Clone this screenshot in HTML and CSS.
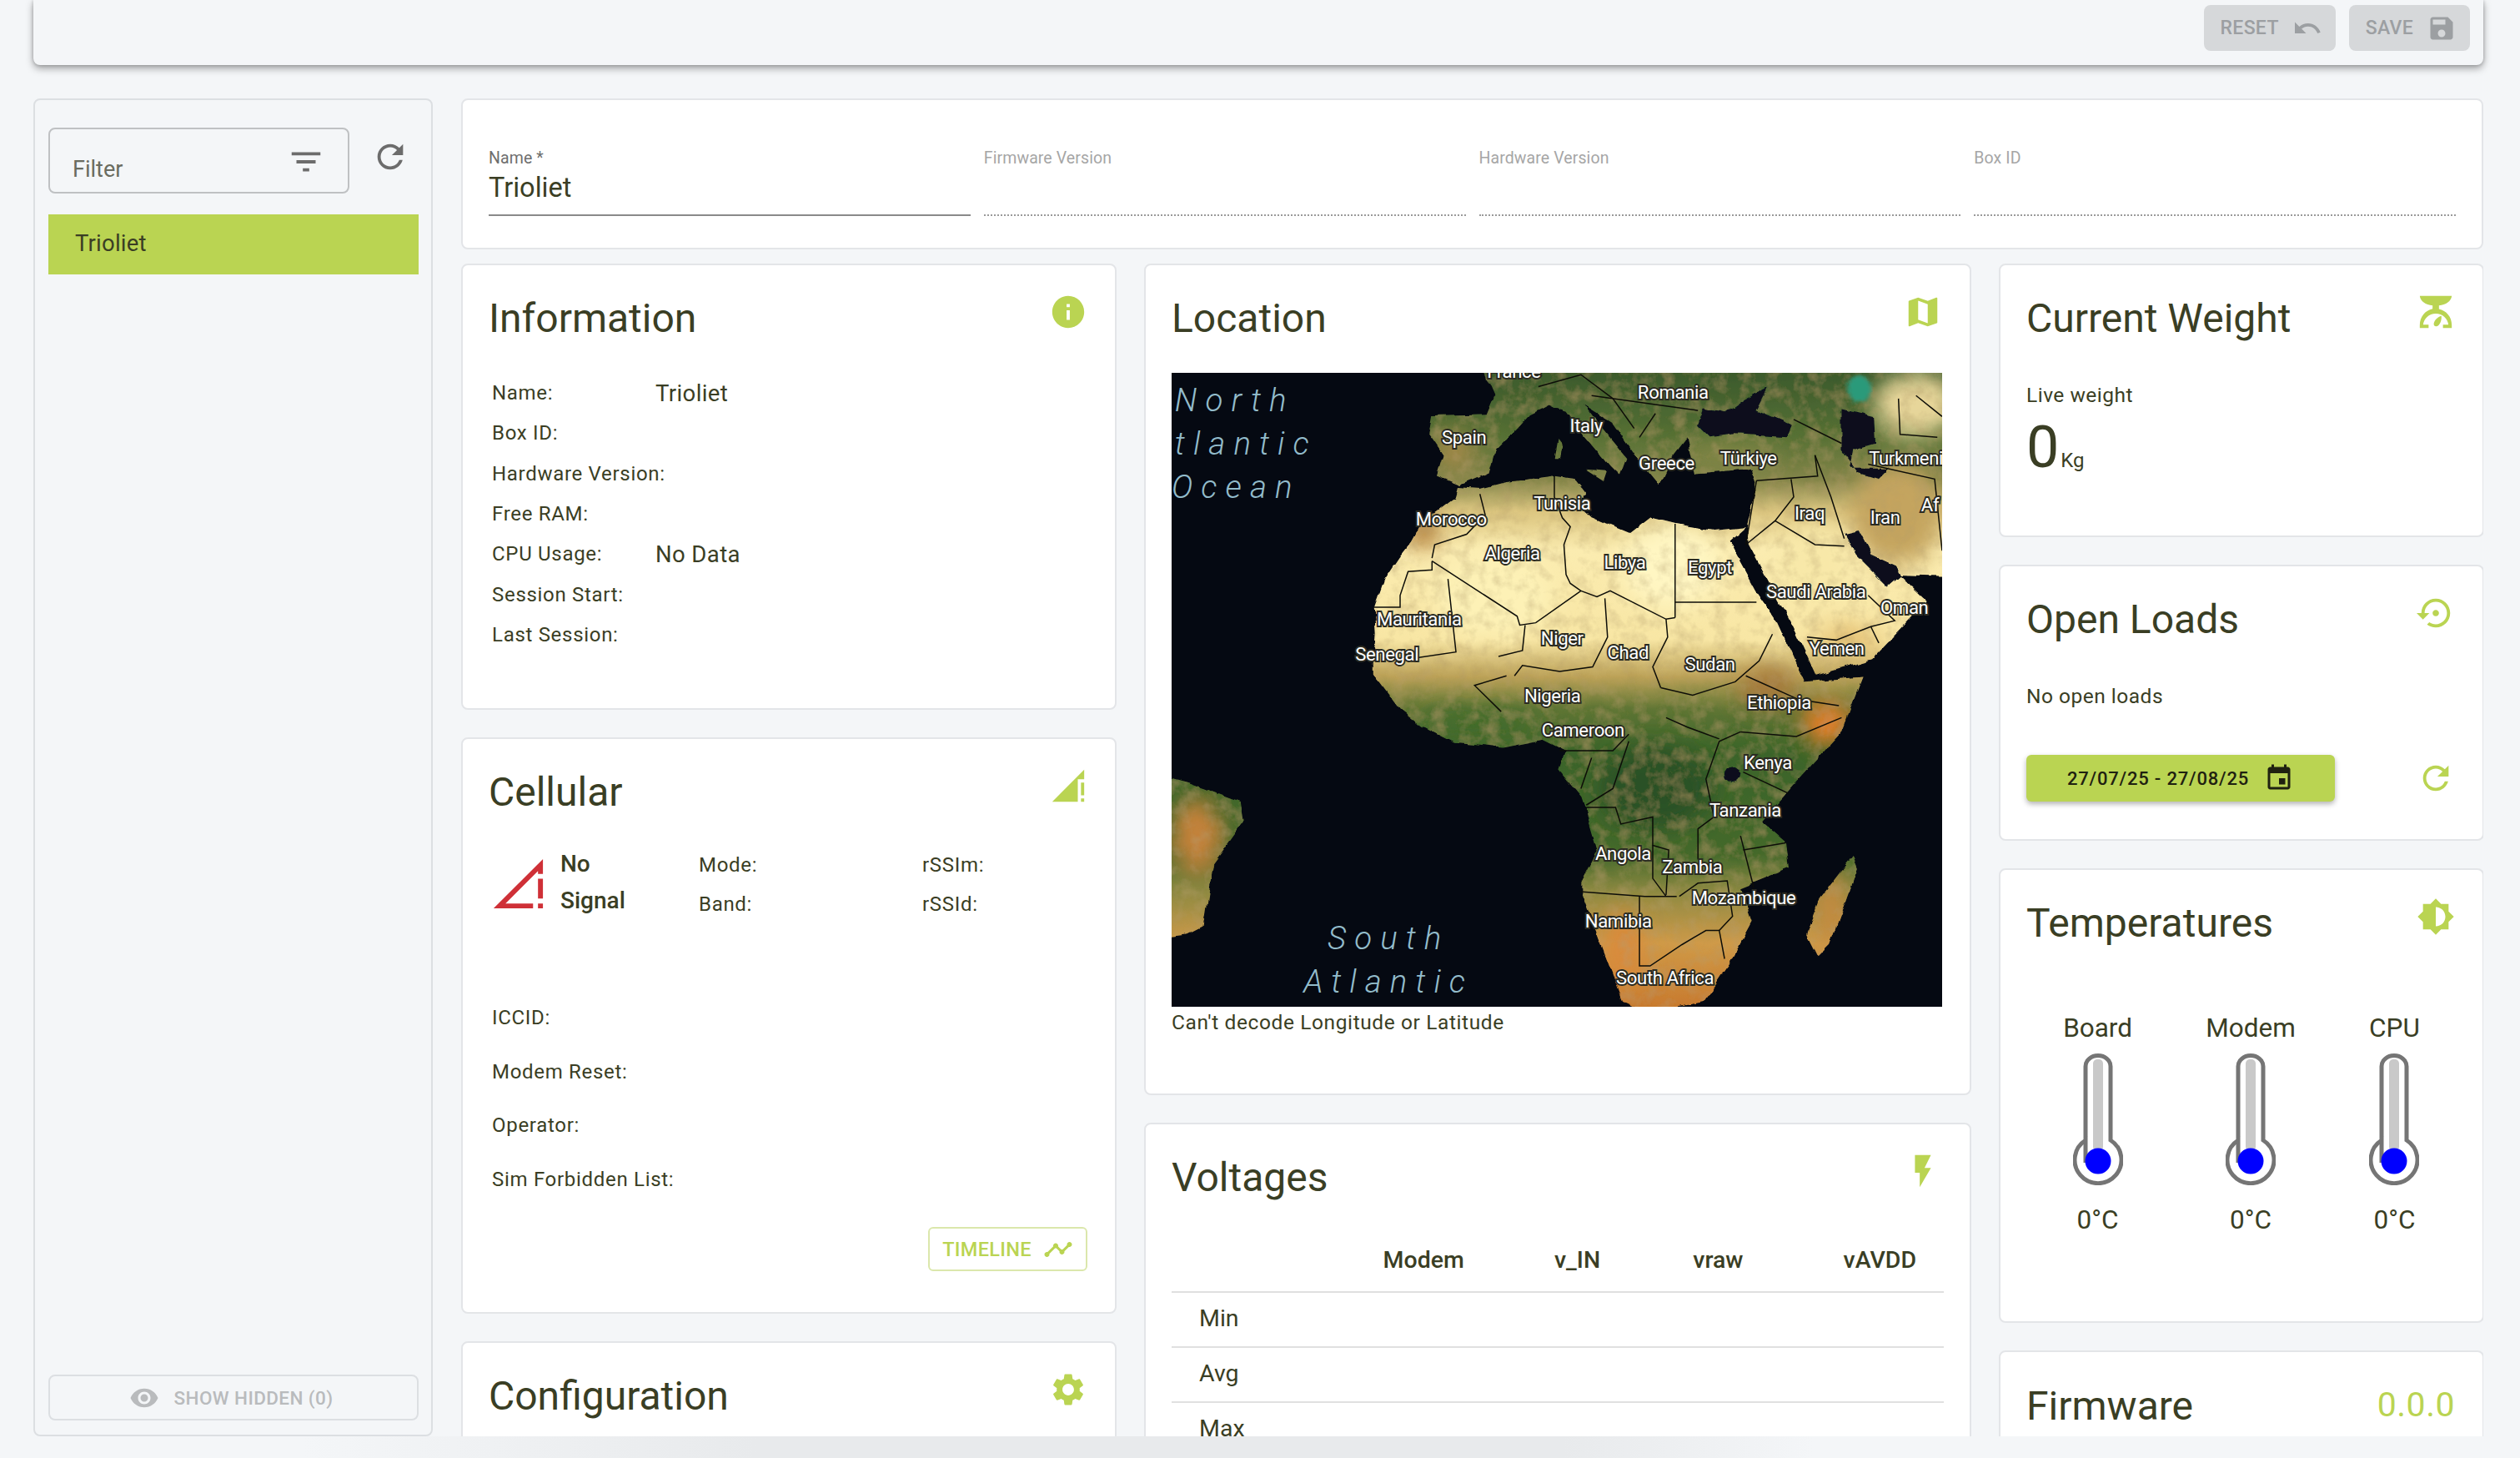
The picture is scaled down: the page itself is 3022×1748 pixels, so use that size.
FILE: index.html
```html
<!DOCTYPE html>
<html lang="en">
<head>
    <meta charset="UTF-8">
    <meta name="viewport" content="width=device-width, initial-scale=1.0">
    <title>Device Details</title>
    <link rel="stylesheet" href="styles.css">
</head>
<body>
    <svg class="defs" aria-hidden="true">
        <symbol id="thermometer" viewBox="0 0 60 160">
            <path d="M15 133 V17.500 a15 13 0 0 1 30 0 V106 a28 28 0 1 1 -30 0 Z" fill="#fff" stroke="#757575" stroke-width="5"/>
            <rect x="24" y="9" width="12" height="110" rx="5" fill="#c9c9c9"/>
            <circle cx="30" cy="131" r="15.5" fill="#0000ff"/>
        </symbol>
    </svg>

    <header class="toolbar">
        <button class="toolbar-btn">RESET
            <svg class="btn-icon" viewBox="0 0 24 24"><path d="M12.5 8c-2.65 0-5.05.99-6.9 2.6L2 7v9h9l-3.62-3.62c1.39-1.16 3.16-1.88 5.12-1.88 3.54 0 6.55 2.31 7.6 5.5l2.37-.78C21.08 11.03 17.15 8 12.5 8z"/></svg>
        </button>
        <button class="toolbar-btn">SAVE
            <svg class="btn-icon" viewBox="0 0 24 24"><path d="M17 3H5c-1.11 0-2 .9-2 2v14c0 1.1.89 2 2 2h14c1.1 0 2-.9 2-2V7l-4-4zm-5 16c-1.66 0-3-1.34-3-3s1.34-3 3-3 3 1.34 3 3-1.34 3-3 3zm3-10H5V5h10v4z"/></svg>
        </button>
    </header>

    <div class="content">
        <aside class="sidebar">
            <div class="filter-row">
                <div class="filter-box">
                    <span class="filter-text">Filter</span>
                    <svg class="icon filter-icon" viewBox="0 0 24 24"><path d="M10 18h4v-2h-4v2zM3 6v2h18V6H3zm3 7h12v-2H6v2z"/></svg>
                </div>
                <svg class="icon refresh-grey" viewBox="0 0 24 24"><path d="M17.65 6.35C16.2 4.9 14.21 4 12 4c-4.42 0-7.99 3.58-7.99 8s3.57 8 7.99 8c3.73 0 6.84-2.55 7.73-6h-2.08c-.82 2.33-3.04 4-5.65 4-3.31 0-6-2.69-6-6s2.69-6 6-6c1.66 0 3.14.69 4.22 1.78L13 11h7V4l-2.35 2.35z"/></svg>
            </div>
            <div class="device-item">Trioliet</div>
            <button class="show-hidden">
                <svg class="eye-icon" viewBox="0 0 24 24"><path d="M12 4.5C7 4.5 2.73 7.61 1 12c1.73 4.39 6 7.5 11 7.5s9.27-3.11 11-7.5c-1.73-4.39-6-7.5-11-7.5zM12 17c-2.76 0-5-2.24-5-5s2.24-5 5-5 5 2.24 5 5-2.24 5-5 5zm0-8c-1.66 0-3 1.34-3 3s1.34 3 3 3 3-1.34 3-3-1.34-3-3-3z"/></svg>
                SHOW HIDDEN (0)
            </button>
        </aside>

        <main class="main">
            <section class="card name-card">
                <div class="field field-active">
                    <label>Name *</label>
                    <div class="field-value">Trioliet</div>
                </div>
                <div class="field">
                    <label>Firmware Version</label>
                    <div class="field-value"></div>
                </div>
                <div class="field">
                    <label>Hardware Version</label>
                    <div class="field-value"></div>
                </div>
                <div class="field">
                    <label>Box ID</label>
                    <div class="field-value"></div>
                </div>
            </section>

            <div class="columns">
                <div class="column">
                    <section class="card info-card">
                        <div class="card-head">
                            <h2>Information</h2>
                            <svg class="icon" viewBox="0 0 24 24"><path d="M12 2C6.48 2 2 6.48 2 12s4.48 10 10 10 10-4.48 10-10S17.52 2 12 2zm1 15h-2v-6h2v6zm0-8h-2V7h2v2z"/></svg>
                        </div>
                        <div class="info-row"><span class="info-label">Name:</span><span class="info-value">Trioliet</span></div>
                        <div class="info-row"><span class="info-label">Box ID:</span></div>
                        <div class="info-row"><span class="info-label">Hardware Version:</span></div>
                        <div class="info-row"><span class="info-label">Free RAM:</span></div>
                        <div class="info-row"><span class="info-label">CPU Usage:</span><span class="info-value">No Data</span></div>
                        <div class="info-row"><span class="info-label">Session Start:</span></div>
                        <div class="info-row"><span class="info-label">Last Session:</span></div>
                    </section>

                    <section class="card cellular-card">
                        <div class="card-head">
                            <h2>Cellular</h2>
                            <svg class="icon" viewBox="0 0 24 24"><path d="M20 18h2v-8h-2v8zm0 4h2v-2h-2v2zM2 22h16V8h4V2L2 22z"/></svg>
                        </div>
                        <div class="signal-grid">
                            <div class="signal-status">
                                <svg class="signal-icon" viewBox="0 0 24 24"><path d="M2 22h16v-2H6.83L20 6.83V8h2V2L2 22zM20 18h2v-8h-2v8zM20 22h2v-2h-2v2z"/></svg>
                                <div class="signal-text">No<br>Signal</div>
                            </div>
                            <div class="signal-col">
                                <div class="signal-cell">Mode:</div>
                                <div class="signal-cell">Band:</div>
                            </div>
                            <div class="signal-col">
                                <div class="signal-cell">rSSIm:</div>
                                <div class="signal-cell">rSSId:</div>
                            </div>
                        </div>
                        <div class="cell-row">ICCID:</div>
                        <div class="cell-row">Modem Reset:</div>
                        <div class="cell-row">Operator:</div>
                        <div class="cell-row">Sim Forbidden List:</div>
                        <div class="card-actions">
                            <button class="timeline-btn">TIMELINE
                                <svg class="btn-icon" viewBox="0 0 24 24"><path d="M23 8c0 1.1-.9 2-2 2-.18 0-.35-.02-.51-.07l-3.56 3.55c.05.16.07.34.07.52 0 1.1-.9 2-2 2s-2-.9-2-2c0-.18.02-.36.07-.52l-2.55-2.55c-.16.05-.34.07-.52.07s-.36-.02-.52-.07l-4.55 4.56c.05.16.07.33.07.51 0 1.1-.9 2-2 2s-2-.9-2-2 .9-2 2-2c.18 0 .35.02.51.07l4.56-4.55C8.02 9.36 8 9.18 8 9c0-1.1.9-2 2-2s2 .9 2 2c0 .18-.02.36-.07.52l2.55 2.55c.16-.05.34-.07.52-.07s.36.02.52.07l3.55-3.56C19.02 8.35 19 8.18 19 8c0-1.1.9-2 2-2s2 .9 2 2z"/></svg>
                            </button>
                        </div>
                    </section>

                    <section class="card">
                        <div class="card-head">
                            <h2>Configuration</h2>
                            <svg class="icon" viewBox="0 0 24 24"><path d="M19.14 12.94c.04-.3.06-.61.06-.94 0-.32-.02-.64-.07-.94l2.03-1.58c.18-.14.23-.41.12-.61l-1.92-3.32c-.12-.22-.37-.29-.59-.22l-2.39.96c-.5-.38-1.03-.7-1.62-.94l-.36-2.54c-.04-.24-.24-.41-.48-.41h-3.84c-.24 0-.43.17-.47.41l-.36 2.54c-.59.24-1.13.57-1.62.94l-2.39-.96c-.22-.08-.47 0-.59.22L2.74 8.87c-.12.21-.08.47.12.61l2.03 1.58c-.05.3-.09.63-.09.94s.02.64.07.94l-2.03 1.58c-.18.14-.23.41-.12.61l1.92 3.32c.12.22.37.29.59.22l2.39-.96c.5.38 1.03.7 1.62.94l.36 2.54c.05.24.24.41.48.41h3.84c.24 0 .44-.17.47-.41l.36-2.54c.59-.24 1.13-.56 1.62-.94l2.39.96c.22.08.47 0 .59-.22l1.92-3.32c.12-.22.07-.47-.12-.61l-2.01-1.58zM12 15.6c-1.98 0-3.6-1.62-3.6-3.6s1.62-3.6 3.6-3.6 3.6 1.62 3.6 3.6-1.62 3.6-3.6 3.6z"/></svg>
                        </div>
                        <div class="spacer"></div>
                    </section>
                </div>

                <div class="column">
                    <section class="card location-card">
                        <div class="card-head">
                            <h2>Location</h2>
                            <svg class="icon" viewBox="0 0 24 24"><path d="m20.5 3-.16.03L15 5.1 9 3 3.36 4.9c-.21.07-.36.25-.36.48V20.5c0 .28.22.5.5.5l.16-.03L9 18.9l6 2.1 5.64-1.9c.21-.07.36-.25.36-.48V3.5c0-.28-.22-.5-.5-.5zM15 19l-6-2.11V5l6 2.11V19z"/></svg>
                        </div>
                        <svg class="map" viewBox="729 232 479.5 394" preserveAspectRatio="none">
                            <defs>
                                <linearGradient id="landTone" gradientUnits="userSpaceOnUse" x1="0" y1="232" x2="0" y2="626">
                                    <stop offset="0" stop-color="#3b5a2c"/>
                                    <stop offset="0.1" stop-color="#567034"/>
                                    <stop offset="0.17" stop-color="#85864a"/>
                                    <stop offset="0.22" stop-color="#dcc680"/>
                                    <stop offset="0.28" stop-color="#fbecb0"/>
                                    <stop offset="0.42" stop-color="#f8e6a4"/>
                                    <stop offset="0.48" stop-color="#bba157"/>
                                    <stop offset="0.53" stop-color="#5f7534"/>
                                    <stop offset="0.6" stop-color="#3a6429"/>
                                    <stop offset="0.76" stop-color="#44692b"/>
                                    <stop offset="0.82" stop-color="#8f8a42"/>
                                    <stop offset="0.9" stop-color="#cf9a48"/>
                                    <stop offset="1" stop-color="#c87a2e"/>
                                </linearGradient>
                                <clipPath id="landClip">
                                    <path d="M907 303 L905 310 L884 326 L878 337 L871 346 L861 361 L855 378 L856 394 L855 407 L855 420 L870 440 L885 452 L905 462 L935 465 L960 460 L974 467 L970 479 L984 496 L987 505 L994 529 L984 549 L984 555 L995 584 L1010 623 L1025 630 L1060 623 L1076 599 L1090 573 L1083 552 L1113 540 L1111 524 L1096 511 L1119 485 L1146 455 L1159 421 L1123 424 L1106 387 L1093 368 L1076 337 L1086 328 L1067 330 L1043 326 L1027 322 L1014 332 L990 322 L980 313 L987 307 L980 298 L967 296 L937 300 L921 304 Z
                                    M922 228 L930 246 L925 258 L891 259 L889 270 L898 283 L894 296 L908 302 L927 294 L931 280 L944 267 L952 258 L964 252 L975 256 L985 270 L1002 290 L1008 296 L1012 285 L998 268 L986 252 L1002 262 L1018 285 L1032 302 L1040 285 L1050 272 L1055 295 L1090 292 L1093 300 L1087 328 L1088 338 L1106 372 L1116 390 L1130 420 L1165 410 L1199 374 L1182 358 L1214 359 L1214 228 Z
                                    M969 274 L972 278 L971 285 L967 285 Z M987 292 L1000 293 L998 299 Z
                                    M1153 532 L1156 540 L1139 587 L1131 595 L1124 581 L1133 558 Z
                                    M724 483 L739 487 L772 499 L774 511 L755 537 L749 576 L739 581 L724 583 Z"/>
                                </clipPath>
                                <filter id="rough" x="-5%" y="-5%" width="110%" height="110%">
                                    <feTurbulence type="fractalNoise" baseFrequency="0.09" numOctaves="3" seed="7" result="warp"/>
                                    <feDisplacementMap in="SourceGraphic" in2="warp" scale="4" xChannelSelector="R" yChannelSelector="G" result="land"/>
                                    <feTurbulence type="fractalNoise" baseFrequency="0.12" numOctaves="4" seed="3"/>
                                    <feColorMatrix values="0 0 0 0 0.45  0 0 0 0 0.33  0 0 0 0 0.14  0.9 0 0 0 -0.38" result="grain"/>
                                    <feComposite in="grain" in2="land" operator="in" result="speck"/>
                                    <feMerge><feMergeNode in="land"/><feMergeNode in="speck"/></feMerge>
                                </filter>
                                <filter id="warpOnly" x="-5%" y="-5%" width="110%" height="110%">
                                    <feTurbulence type="fractalNoise" baseFrequency="0.09" numOctaves="3" seed="7" result="warp"/>
                                    <feDisplacementMap in="SourceGraphic" in2="warp" scale="4" xChannelSelector="R" yChannelSelector="G"/>
                                </filter>
                                <filter id="soft"><feGaussianBlur stdDeviation="7"/></filter>
                                <filter id="softer"><feGaussianBlur stdDeviation="1.5"/></filter>
                            </defs>
                            <rect x="729" y="232" width="480" height="394" fill="#050912"/>
                            <g filter="url(#rough)">
                                <g clip-path="url(#landClip)">
                                    <rect x="720" y="225" width="495" height="410" fill="url(#landTone)"/>
                                    <g filter="url(#soft)">
                                        <ellipse cx="745" cy="520" rx="16" ry="24" fill="#c4823a"/>
                                        <ellipse cx="1180" cy="320" rx="28" ry="32" fill="#c4a45e"/>
                                        <ellipse cx="1137" cy="450" rx="16" ry="14" fill="#e07f2c"/>
                                        <ellipse cx="1100" cy="428" rx="18" ry="12" fill="#a5783a"/>
                                        <ellipse cx="1140" cy="565" rx="9" ry="24" fill="#c58a40"/>
                                        <ellipse cx="1030" cy="490" rx="36" ry="26" fill="#2c5126"/>
                                        <ellipse cx="920" cy="450" rx="38" ry="7" fill="#3d6a2c"/>
                                        <ellipse cx="1075" cy="284" rx="30" ry="10" fill="#7e8444"/>
                                        <ellipse cx="905" cy="280" rx="12" ry="12" fill="#a68a4a"/>
                                        <ellipse cx="1192" cy="252" rx="26" ry="20" fill="#e7d69a"/>
                                        <ellipse cx="1040" cy="352" rx="30" ry="26" fill="#fff6c2"/>
                                        <ellipse cx="930" cy="370" rx="36" ry="26" fill="#fdf1b6"/>
                                        <ellipse cx="1130" cy="350" rx="22" ry="22" fill="#f8e8a8"/>
                                        <ellipse cx="1150" cy="398" rx="20" ry="9" fill="#e3bf72"/>
                                        <ellipse cx="885" cy="330" rx="10" ry="12" fill="#b2803e"/>
                                        <ellipse cx="1010" cy="590" rx="12" ry="24" fill="#d98a3a"/>
                                    </g>
                                </g>
                            </g>
                            <g filter="url(#warpOnly)">
                                <g fill="#070d1c">
                                    <path d="M1056 265 L1060 254 L1073 257 L1086 248 L1100 241 L1093 255 L1116 265 L1113 272 L1080 270 L1063 272 Z"/>
                                    <path d="M1146 254 L1166 259 L1167 276 L1153 280 L1151 291 L1176 291 L1169 298 L1156 294 L1146 280 Z"/>
                                    <path d="M1148 332 L1157 330 L1165 345 L1180 352 L1183 358 L1175 365 L1165 355 L1155 345 Z"/>
                                    <ellipse cx="1078" cy="482" rx="5" ry="5"/>
                                </g>
                                <ellipse cx="1157" cy="242" rx="7" ry="8" fill="#2c9a7a" filter="url(#softer)"/>
                            </g>
                            <g class="map-borders" transform="translate(705.7 160.9) scale(.331 .1853)">
                                <polyline points="650,790 660,860 625,925 565,960 560,1005"/>
                                <polyline points="450,1170 500,1170 500,1130 515,1050 560,1045 560,1015"/>
                                <polyline points="560,1015 720,1200 725,1230 755,1222 840,1115"/>
                                <polyline points="790,730 790,800 805,870 820,900 808,960 812,1060 820,1090 840,1115"/>
                                <polyline points="840,1115 870,1135 895,1115 1000,1210 1017,1205"/>
                                <polyline points="1017,890 1017,1205"/>
                                <polyline points="1017,1153 1170,1153"/>
                                <polyline points="885,1140 890,1270 862,1370 800,1385 730,1365 715,1400"/>
                                <polyline points="735,1230 730,1315 685,1335"/>
                                <polyline points="590,1075 605,1320 530,1340"/>
                                <polyline points="1000,1210 1003,1270 975,1370 990,1440"/>
                                <polyline points="700,1400 640,1432 690,1520"/>
                                <polyline points="990,1440 1050,1465 1130,1420 1175,1350 1200,1260"/>
                                <polyline points="1170,745 1285,730 1280,660"/>
                                <polyline points="1170,745 1150,960"/>
                                <polyline points="1235,740 1240,800 1205,880 1150,960"/>
                                <polyline points="1205,880 1280,960 1335,965"/>
                                <polyline points="1280,660 1310,800 1335,940"/>
                                <polyline points="1380,690 1505,740 1519,980"/>
                                <polyline points="1265,1270 1320,1280 1385,1235 1430,1215 1380,1130"/>
                                <polyline points="1385,1235 1400,1290"/>
                                <polyline points="760,430 840,390 900,470 940,570"/>
                                <polyline points="860,460 980,490 1060,510"/>
                                <polyline points="950,600 980,520"/>
                                <polyline points="1240,540 1330,620"/>
                                <polyline points="1437,470 1440,590 1510,600"/>
                                <polyline points="1470,460 1519,530"/>
                                <polyline points="1150,1400 1250,1480 1325,1500"/>
                            </g>
                            <g class="map-borders" transform="translate(705.7 446.3) scale(.331 .2939)">
                                <polyline points="850,190 905,190 915,225 975,210 975,270 1005,280 1000,375"/>
                                <polyline points="838,368 960,378 1020,378"/>
                                <polyline points="950,378 950,525 970,525 1030,480 1075,450 1100,450 1110,510"/>
                                <polyline points="1100,450 1125,420 1115,345 1060,350 1025,378"/>
                                <polyline points="975,270 975,340 1000,378"/>
                                <polyline points="1140,30 1100,50 1075,130 1090,210 1060,235 1060,300"/>
                                <polyline points="1140,250 1165,360"/>
                                <polyline points="1145,280 1225,265"/>
                                <polyline points="800,70 900,70 930,35"/>
                                <polyline points="860,85 840,150"/>
                                <polyline points="930,50 900,150 850,185"/>
                                <polyline points="1140,30 1245,40 1330,0"/>
                                <polyline points="1145,115 1230,160"/>
                                <polyline points="1000,0 1040,20 1100,45"/>
                            </g>
                            <g class="map-ocean">
                                <text x="731" y="256">North</text>
                                <text x="731" y="283">tlantic</text>
                                <text x="729" y="310">Ocean</text>
                                <text x="864" y="590" text-anchor="middle">South</text>
                                <text x="864" y="617" text-anchor="middle">Atlantic</text>
                            </g>
                            <g class="map-labels" text-anchor="middle">
                                <text x="942" y="235">France</text>
                                <text x="1041" y="248">Romania</text>
                                <text x="987" y="269">Italy</text>
                                <text x="911" y="276">Spain</text>
                                <text x="1037" y="292">Greece</text>
                                <text x="1088" y="289">Türkiye</text>
                                <text x="1186" y="289">Turkmeni</text>
                                <text x="1173" y="326">Iran</text>
                                <text x="1126" y="323">Iraq</text>
                                <text x="1201" y="318">Af</text>
                                <text x="972" y="317">Tunisia</text>
                                <text x="903" y="327">Morocco</text>
                                <text x="941" y="348">Algeria</text>
                                <text x="1011" y="354">Libya</text>
                                <text x="1064" y="357">Egypt</text>
                                <text x="1130" y="372">Saudi Arabia</text>
                                <text x="1185" y="382">Oman</text>
                                <text x="883" y="389">Mauritania</text>
                                <text x="972" y="401">Niger</text>
                                <text x="863" y="411">Senegal</text>
                                <text x="1013" y="410">Chad</text>
                                <text x="1064" y="417">Sudan</text>
                                <text x="1143" y="407">Yemen</text>
                                <text x="966" y="437">Nigeria</text>
                                <text x="1107" y="441">Ethiopia</text>
                                <text x="985" y="458">Cameroon</text>
                                <text x="1100" y="478">Kenya</text>
                                <text x="1086" y="508">Tanzania</text>
                                <text x="1010" y="535">Angola</text>
                                <text x="1053" y="543">Zambia</text>
                                <text x="1085" y="562">Mozambique</text>
                                <text x="1007" y="577">Namibia</text>
                                <text x="1036" y="612">South Africa</text>
                            </g>
                        </svg>
                        <p class="map-note">Can't decode Longitude or Latitude</p>
                    </section>

                    <section class="card">
                        <div class="card-head">
                            <h2>Voltages</h2>
                            <svg class="icon" viewBox="0 0 24 24"><path d="M7 2v11h3v9l7-12h-4l4-8z"/></svg>
                        </div>
                        <table class="volt-table">
                            <thead>
                                <tr><th></th><th>Modem</th><th>v_IN</th><th>vraw</th><th>vAVDD</th></tr>
                            </thead>
                            <tbody>
                                <tr><td>Min</td><td></td><td></td><td></td><td></td></tr>
                                <tr><td>Avg</td><td></td><td></td><td></td><td></td></tr>
                                <tr><td>Max</td><td></td><td></td><td></td><td></td></tr>
                            </tbody>
                        </table>
                    </section>
                </div>

                <div class="column">
                    <section class="card weight-card">
                        <div class="card-head">
                            <h2>Current Weight</h2>
                            <svg class="icon" viewBox="0 0 24 24"><path d="M2 2h20c-.3 3.2-3.6 5.6-8 6v2.2c4.6.9 8 5 8 10V22h-5.5v-2h3.4c-.4-3.8-3.6-7-7.9-7s-7.5 3.2-7.9 7h3.4v2H2v-1.800c0-5.2 3.4-9.3 8-10.2V8C5.6 7.6 2.3 5.2 2 2z"/><path d="M15.5 14.5c.3 3-1 6-3 6.500-1.2.2-2-.8-1.700-2 .5-2 2.500-4 4.700-4.500z"/></svg>
                        </div>
                        <div class="body-line">Live weight</div>
                        <div class="weight-value"><span class="weight-number">0</span><span class="weight-unit">Kg</span></div>
                    </section>

                    <section class="card loads-card">
                        <div class="card-head">
                            <h2>Open Loads</h2>
                            <svg class="icon" viewBox="0 0 24 24"><path d="M14 12c0-1.1-.9-2-2-2s-2 .9-2 2 .9 2 2 2 2-.9 2-2zm-2-9c-4.97 0-9 4.03-9 9H0l4 4 4-4H5c0-3.87 3.13-7 7-7s7 3.13 7 7-3.13 7-7 7c-1.51 0-2.91-.49-4.06-1.3l-1.42 1.44C8.04 20.3 9.94 21 12 21c4.97 0 9-4.03 9-9s-4.03-9-9-9z"/></svg>
                        </div>
                        <div class="body-line">No open loads</div>
                        <div class="date-row">
                            <button class="date-btn">27/07/25 - 27/08/25
                                <svg class="btn-icon" viewBox="0 0 24 24"><path d="M17 12h-5v5h5v-5zM16 1v2H8V1H6v2H5c-1.11 0-1.99.9-1.99 2L3 19c0 1.1.89 2 2 2h14c1.1 0 2-.9 2-2V5c0-1.1-.9-2-2-2h-1V1h-2zm3 18H5V8h14v11z"/></svg>
                            </button>
                            <svg class="icon" viewBox="0 0 24 24"><path d="M17.65 6.35C16.2 4.9 14.21 4 12 4c-4.42 0-7.99 3.58-7.99 8s3.57 8 7.99 8c3.73 0 6.84-2.55 7.73-6h-2.08c-.82 2.33-3.04 4-5.65 4-3.31 0-6-2.69-6-6s2.69-6 6-6c1.66 0 3.14.69 4.22 1.78L13 11h7V4l-2.35 2.35z"/></svg>
                        </div>
                    </section>

                    <section class="card temps-card">
                        <div class="card-head">
                            <h2>Temperatures</h2>
                            <svg class="icon" viewBox="0 0 24 24"><path d="M20 15.31 23.31 12 20 8.69V4h-4.69L12 .69 8.69 4H4v4.69L.69 12 4 15.31V20h4.69L12 23.31 15.31 20H20v-4.69zM12 18V6c3.31 0 6 2.69 6 6s-2.69 6-6 6z"/></svg>
                        </div>
                        <div class="temps">
                            <div class="temp">
                                <span>Board</span>
                                <svg class="thermo"><use href="#thermometer"/></svg>
                                <span>0°C</span>
                            </div>
                            <div class="temp">
                                <span>Modem</span>
                                <svg class="thermo"><use href="#thermometer"/></svg>
                                <span>0°C</span>
                            </div>
                            <div class="temp">
                                <span>CPU</span>
                                <svg class="thermo"><use href="#thermometer"/></svg>
                                <span>0°C</span>
                            </div>
                        </div>
                    </section>

                    <section class="card">
                        <div class="card-head firmware-head">
                            <h2>Firmware</h2>
                            <span class="firmware-version">0.0.0</span>
                        </div>
                        <div class="spacer"></div>
                    </section>
                </div>
            </div>
        </main>
    </div>

    <div class="bottom-bar"></div>
</body>
</html>
```

FILE: styles.css
```css
* {
    margin: 0;
    padding: 0;
    box-sizing: border-box;
}

body {
    font-family: Roboto, 'Liberation Sans', sans-serif;
    background: #f4f6f8;
    color: #3a3e24;
    width: 3022px;
    height: 1748px;
    overflow: hidden;
    display: flex;
    flex-direction: column;
    padding: 0 44px 0 40px;
}

.defs {
    display: none;
}

button {
    font-family: inherit;
    border: none;
}

.icon {
    width: 46px;
    height: 46px;
    fill: #bad452;
    flex: none;
}

/* Top toolbar */
.toolbar {
    flex: none;
    height: 78px;
    padding: 6px 16px 0 0;
    background: #f4f6f8;
    border-radius: 0 0 8px 8px;
    box-shadow: 0 4px 10px rgba(0, 0, 0, 0.35), 0 0 4px rgba(0, 0, 0, 0.2);
    display: flex;
    justify-content: flex-end;
    align-items: flex-start;
    gap: 16px;
}

.toolbar-btn {
    height: 55px;
    padding: 0 16px 0 20px;
    border-radius: 8px;
    background: #d6d8da;
    color: #9c9fa2;
    font-size: 23px;
    font-weight: 500;
    letter-spacing: 0.3px;
    display: flex;
    align-items: center;
    gap: 16px;
}

.btn-icon {
    width: 36px;
    height: 36px;
    fill: currentColor;
    flex: none;
}

/* Sidebar + main */
.content {
    flex: 1;
    min-height: 0;
    margin-top: 40px;
    display: flex;
    gap: 34px;
}

.sidebar {
    flex: none;
    width: 479px;
    padding: 33px 15px 17px 16px;
    border: 2px solid #dcdfe2;
    border-radius: 8px;
    display: flex;
    flex-direction: column;
}

.filter-row {
    display: flex;
    align-items: flex-start;
    gap: 26px;
}

.filter-box {
    width: 361px;
    height: 79px;
    padding: 0 27px;
    border: 2px solid #bfc1c3;
    border-radius: 8px;
    display: flex;
    justify-content: space-between;
}

.filter-text {
    margin-top: 28px;
    font-size: 27px;
    line-height: 40px;
    color: #6a6c60;
}

.filter-icon {
    margin: 16px 0 0 0;
    fill: #6c6c6c;
}

.refresh-grey {
    margin-top: 12px;
    fill: #6c6c6c;
}

.device-item {
    margin-top: 25px;
    height: 72px;
    padding-left: 32px;
    background: #bad452;
    font-size: 27.5px;
    line-height: 70px;
    letter-spacing: 0.2px;
}

.show-hidden {
    margin-top: auto;
    height: 55px;
    padding-right: 6px;
    background: transparent;
    border: 2px solid #dcdfe2;
    border-radius: 8px;
    color: #b9bbbd;
    font-size: 22.5px;
    font-weight: 500;
    letter-spacing: 0.4px;
    display: flex;
    align-items: center;
    justify-content: center;
    gap: 18px;
}

.eye-icon {
    width: 36px;
    height: 36px;
    fill: #b9bbbd;
}

.main {
    flex: 1;
    min-width: 0;
    overflow: hidden;
}

.card {
    background: #fff;
    border: 2px solid #e3e5e8;
    border-radius: 8px;
    padding: 33px 31px;
}

/* Name strip */
.name-card {
    height: 181px;
    padding: 55px 31px 0 31px;
    display: grid;
    grid-template-columns: repeat(4, 1fr);
    gap: 16px;
}

.field {
    height: 84px;
    border-bottom: 2px dotted #9b9b9b;
}

.field-active {
    border-bottom: 2px solid #8a8a8a;
}

.field label {
    display: block;
    height: 30px;
    font-size: 19.5px;
    line-height: 30px;
    letter-spacing: 0.1px;
    color: #a6a6a6;
}

.field-active label {
    color: #6e6e6e;
}

.field-value {
    height: 40px;
    font-size: 32.5px;
    line-height: 40px;
}

.columns {
    margin-top: 17px;
    display: grid;
    grid-template-columns: 786px 992px 582px;
    gap: 33px;
}

.column {
    display: flex;
    flex-direction: column;
    gap: 33px;
}

.card-head {
    height: 60px;
    display: flex;
    justify-content: space-between;
    align-items: flex-start;
}

.card-head .icon {
    margin-right: 2px;
}

h2 {
    margin-top: 1px;
    font-size: 48px;
    font-weight: 400;
    line-height: 60px;
}

.spacer {
    height: 60px;
}

/* Information */
.info-card {
    height: 535px;
}

.info-card .card-head {
    margin-bottom: 36px;
}

.info-row {
    height: 48.3px;
    padding-left: 4px;
    display: flex;
    align-items: center;
}

.info-label {
    width: 196px;
    font-size: 24px;
    letter-spacing: 0.7px;
    white-space: nowrap;
}

.info-value {
    font-size: 27.5px;
    letter-spacing: 0.4px;
}

/* Cellular */
.cellular-card {
    height: 691px;
}

.signal-grid {
    margin-top: 35px;
    height: 174px;
    display: grid;
    grid-template-columns: 252px 268px 1fr;
}

.signal-status {
    display: flex;
    gap: 15px;
}

.signal-icon {
    margin-top: 10px;
    width: 71px;
    height: 71px;
    fill: #cf3037;
}

.signal-text {
    font-size: 28px;
    font-weight: 500;
    line-height: 44px;
}

.signal-cell {
    height: 47px;
    font-size: 24px;
    line-height: 47px;
    letter-spacing: 0.7px;
}

.cell-row {
    height: 64.5px;
    padding-left: 4px;
    font-size: 24px;
    line-height: 64.5px;
    letter-spacing: 0.7px;
}

.card-actions {
    margin-top: 25px;
    padding-right: 2px;
    display: flex;
    justify-content: flex-end;
}

.timeline-btn {
    width: 191px;
    height: 53px;
    background: #fff;
    border: 2px solid #dbe7ac;
    border-radius: 6px;
    color: #bad452;
    font-size: 23.5px;
    font-weight: 500;
    letter-spacing: 0.3px;
    display: flex;
    align-items: center;
    justify-content: center;
    gap: 14px;
}

/* Location */
.location-card {
    height: 997px;
}

.location-card .card-head {
    margin-bottom: 36px;
}

.map {
    display: block;
    width: 924px;
    height: 760px;
}

.map-borders polyline {
    fill: none;
    stroke: #0d0d08;
    stroke-width: 1.5px;
    vector-effect: non-scaling-stroke;
}

.map-ocean text {
    font-size: 20px;
    font-style: italic;
    font-weight: 300;
    letter-spacing: 5.2px;
    fill: #93bccb;
}

.map-labels text {
    font-size: 11.5px;
    letter-spacing: -0.2px;
    fill: #fff;
    stroke: #2b2b22;
    stroke-width: 2px;
    paint-order: stroke;
}

.map-note {
    font-size: 24.5px;
    line-height: 38px;
    letter-spacing: 0.6px;
}

/* Voltages */
.volt-table {
    width: 100%;
    margin-top: 32px;
    border-collapse: collapse;
    font-size: 28.5px;
    table-layout: fixed;
}

.volt-table th {
    height: 76px;
    padding-right: 33px;
    text-align: right;
    font-weight: 500;
    border-bottom: 2px solid #e0e0e0;
}

.volt-table th:nth-child(1) { width: 220px; }
.volt-table th:nth-child(2) { width: 163px; }
.volt-table th:nth-child(3) { width: 163px; }
.volt-table th:nth-child(4) { width: 171px; }
.volt-table th:nth-child(5) { width: 207px; }

.volt-table td {
    height: 66px;
    padding: 0 0 3px 33px;
    border-bottom: 2px solid #e0e0e0;
}

/* Right column */
.weight-card {
    height: 328px;
}

.body-line {
    margin-top: 43px;
    font-size: 24.5px;
    line-height: 40px;
    letter-spacing: 0.5px;
}

.weight-value {
    margin-top: 2px;
    display: flex;
    align-items: baseline;
    line-height: 80px;
}

.weight-number {
    font-size: 70px;
}

.weight-unit {
    margin-left: 2px;
    font-size: 24px;
}

.loads-card {
    height: 331px;
}

.date-row {
    margin-top: 50px;
    display: flex;
    justify-content: space-between;
    align-items: center;
}

.date-btn {
    width: 370px;
    height: 56px;
    border-radius: 6px;
    background: #bad452;
    color: #1f2110;
    font-size: 22px;
    font-weight: 500;
    letter-spacing: 0.8px;
    box-shadow: 0 3px 6px rgba(0, 0, 0, 0.3);
    display: flex;
    align-items: center;
    justify-content: center;
    gap: 18px;
}

.date-row .icon {
    margin-right: 2px;
}

.temps-card {
    height: 545px;
}

.temps {
    margin-top: 77px;
    display: flex;
    justify-content: space-around;
}

.temp {
    display: flex;
    flex-direction: column;
    align-items: center;
    font-size: 31.5px;
    line-height: 40px;
}

.thermo {
    width: 60px;
    height: 160px;
    margin: 8px 0 22px;
}

.firmware-head {
    align-items: center;
}

.firmware-head h2 {
    margin-top: 4px;
}

.firmware-version {
    margin-right: 2px;
    font-size: 41px;
    letter-spacing: 0.5px;
    color: #bad452;
}

.bottom-bar {
    position: relative;
    flex: none;
    height: 26px;
    margin: 0 -44px 0 -40px;
    background: linear-gradient(to right, rgba(232, 234, 236, 0) 12%, #e8eaec 30%, #e8eaec 62%, rgba(232, 234, 236, 0) 72%);
}
```
